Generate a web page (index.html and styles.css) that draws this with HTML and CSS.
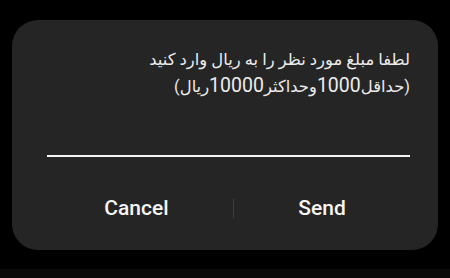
FILE: index.html
```html
<!DOCTYPE html>
<html lang="fa">
<head>
    <meta charset="UTF-8">
    <meta name="viewport" content="width=device-width, initial-scale=1.0">
    <title>Amount</title>
    <link rel="stylesheet" href="styles.css">
</head>
<body>

    <!-- Amount dialog -->
    <div class="dialog">
        <div class="message" dir="rtl">
            لطفا مبلغ مورد نظر را به ریال وارد کنید<br>
            (حداقل<span class="num">1000</span>وحداکثر<span class="num">10000</span>ریال)
        </div>
        <div class="input-line"></div>
        <div class="actions">
            <button class="action-btn cancel">Cancel</button>
            <span class="divider"></span>
            <button class="action-btn send">Send</button>
        </div>
    </div>

    <div class="nav-strip"></div>

</body>
</html>
```

FILE: styles.css
```css
* {
    margin: 0;
    padding: 0;
    box-sizing: border-box;
}
html, body {
    height: 100%;
}
body {
    background: #000;
    color: #f2f2f2;
    font-family: Roboto, "DejaVu Sans", sans-serif;
    overflow: hidden;
    display: flex;
    flex-direction: column;
}
.dialog {
    margin: 20px 12px 0;
    height: 230px;
    background: #252525;
    border-radius: 26px;
    display: flex;
    flex-direction: column;
}
.message {
    /* Roboto for the digits, DejaVu picks up the Arabic letters */
    font-family: Roboto, "DejaVu Sans", sans-serif;
    font-size: 16.4px;
    line-height: 26px;
    color: #ececec;
    text-align: right;
    padding: 27px 28px 0 35px;
    height: 83px;
}
.num {
    font-size: 19.5px;
}
.input-line {
    height: 2px;
    background: #f5f5f5;
    margin: 52px 28px 0 35px;
}
.actions {
    display: flex;
    align-items: center;
    margin-top: 39px;
    padding: 0 28px;
}
.action-btn {
    background: transparent;
    border: none;
    color: #f5f5f5;
    font-family: Roboto, sans-serif;
    font-weight: 500;
    font-size: 21px;
    height: 24px;
    cursor: pointer;
}
.cancel {
    width: 193px;
}
.send {
    flex: 1;
}
.divider {
    width: 1px;
    height: 19px;
    background: #3e3e3e;
}
.nav-strip {
    margin-top: auto;
    height: 9px;
    background: #0a0a0a;
}
```
